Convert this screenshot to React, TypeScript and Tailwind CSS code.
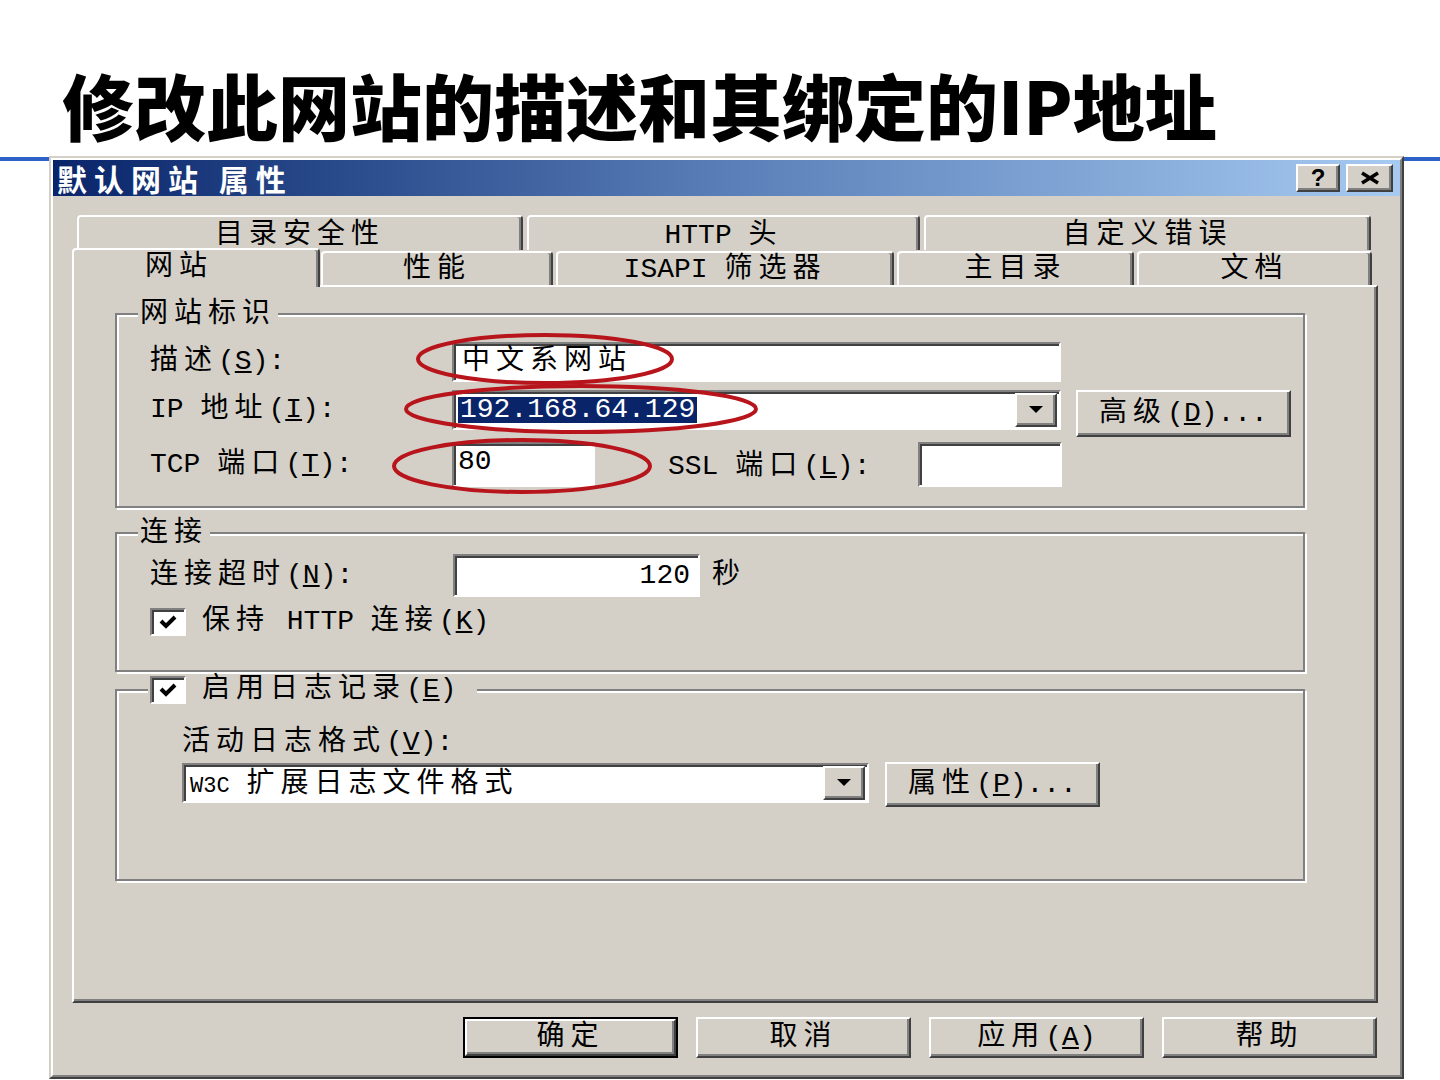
import React from "react";

const CJK = /[\u3000-\u9fff\uff00-\uffef]/;

function T({ s }: { s: string }) {
  const parts: { t: string; c: boolean }[] = [];
  for (const ch of s) {
    const c = CJK.test(ch);
    const last = parts[parts.length - 1];
    if (last && last.c === c) last.t += ch;
    else parts.push({ t: ch, c });
  }
  return (
    <span>
      {parts.map((p, i) =>
        p.c ? (
          <span key={i} className="tracking-[6px]">
            {p.t}
          </span>
        ) : (
          <span key={i} className="whitespace-pre">{p.t}</span>
        )
      )}
    </span>
  );
}

const RAISED =
  "bg-[#d4d0c8] border-2 border-t-white border-l-white border-r-[#404040] border-b-[#404040] shadow-[inset_-2px_-2px_0_#808080]";
const SUNKEN =
  "bg-white border-2 border-t-[#808080] border-l-[#808080] border-r-white border-b-white shadow-[inset_2px_2px_0_#404040]";

function Arrow() {
  return (
    <svg width="14" height="8" viewBox="0 0 14 8">
      <polygon points="0,0 14,0 7,7" fill="#000" />
    </svg>
  );
}

function DropBtn() {
  return (
    <div className={`${RAISED} w-[42px] h-[34px] flex items-center justify-center`}>
      <Arrow />
    </div>
  );
}

function Check() {
  return (
    <div className={`${SUNKEN} w-[36px] h-[28px] flex items-center justify-center shrink-0`}>
      <svg width="22" height="16" viewBox="0 0 22 16">
        <polyline points="4,7 9,12 18,3" fill="none" stroke="#000" strokeWidth="4" />
      </svg>
    </div>
  );
}

function Btn({ children, w = "w-[215px]", h = "h-[41px]" }: { children: React.ReactNode; w?: string; h?: string }) {
  return (
    <div className={`${RAISED} ${w} ${h} flex items-center justify-center`}>{children}</div>
  );
}

function BackTab({ w, children }: { w: string; children: React.ReactNode }) {
  return (
    <div
      className={`${w} h-[35px] bg-[#d4d0c8] border-t-2 border-l-2 border-r-2 border-t-white border-l-white border-r-[#404040] rounded-t-[4px] shadow-[inset_-2px_0_0_#808080] flex justify-center pt-[5px]`}
    >
      {children}
    </div>
  );
}

function FrontTab({ w, children }: { w: string; children: React.ReactNode }) {
  return (
    <div
      className={`${w} h-[36px] bg-[#d4d0c8] border-t-2 border-l-2 border-r-2 border-t-white border-l-white border-r-[#404040] rounded-t-[4px] shadow-[inset_-2px_0_0_#808080] flex justify-center pt-[3px]`}
    >
      {children}
    </div>
  );
}

const FS =
  "border-2 border-[#808080] shadow-[inset_2px_2px_0_#ffffff,2px_2px_0_#ffffff] w-[1190px]";

export default function App() {
  return (
    <div className="relative w-[1440px] h-[1080px] bg-white overflow-hidden font-['Liberation_Mono','Noto_Sans_CJK_SC',monospace] text-black">
      <div className="absolute left-0 top-[157px] h-[4px] w-full bg-[#2f62c8]" />

      <div className="h-[156px] pt-[68px] pl-[62px]">
        <h1 className="text-[72px] leading-[72px] font-black font-['Noto_Sans_CJK_SC',sans-serif] text-black whitespace-nowrap">
          修改此网站的描述和其绑定的IP地址
        </h1>
      </div>

      {/* Dialog */}
      <div className="relative ml-[49px] w-[1355px] h-[923px] bg-[#d4d0c8] border-2 border-t-[#d4d0c8] border-l-[#d4d0c8] border-r-[#404040] border-b-[#404040]">
        <div className="h-full border-2 border-t-white border-l-white border-r-[#808080] border-b-[#808080]">
          {/* Title bar */}
          <div className="h-[36px] bg-linear-to-r from-[#0a246a] via-[#5a7fb8] to-[#a6caf0] flex items-center pl-[4px] pr-[7px]">
            <div className="text-white font-bold text-[30px] leading-[30px] tracking-[7px] font-['Noto_Sans_CJK_SC',sans-serif] flex-1 whitespace-pre">
              默认网站 属性
            </div>
            <div className={`${RAISED} w-[44px] h-[28px] flex items-center justify-center text-[24px] leading-[24px] font-bold font-['Liberation_Sans',sans-serif]`}>
              ?
            </div>
            <div className={`${RAISED} ml-[6px] w-[47px] h-[28px] flex items-center justify-center`}>
              <svg width="22" height="14" viewBox="0 0 22 14">
                <line x1="3" y1="2" x2="19" y2="12" stroke="#000" strokeWidth="3.5" />
                <line x1="19" y1="2" x2="3" y2="12" stroke="#000" strokeWidth="3.5" />
              </svg>
            </div>
          </div>

          {/* Body */}
          <div className="pt-[19px] pl-[19px] text-[28px] leading-[28px]">
            {/* back tab row */}
            <div className="flex gap-[4px] ml-[5px]">
              <BackTab w="w-[446px]">
                <T s="目录安全性" />
              </BackTab>
              <BackTab w="w-[393px]">
                <T s="HTTP 头" />
              </BackTab>
              <BackTab w="w-[447px]">
                <T s="自定义错误" />
              </BackTab>
            </div>
            {/* front tab row */}
            <div className="flex items-end h-[39px] -mt-[2px]">
              <div className="relative z-10 w-[248px] h-[39px] bg-[#d4d0c8] border-t-2 border-l-2 border-r-2 border-t-white border-l-white border-r-[#404040] rounded-t-[4px] shadow-[inset_-2px_0_0_#808080] pl-[71px] pt-[4px]">
                <T s="网站" />
              </div>
              <div className="ml-[1px]">
                <FrontTab w="w-[232px]">
                  <T s="性能" />
                </FrontTab>
              </div>
              <div className="ml-[3px]">
                <FrontTab w="w-[338px]">
                  <T s="ISAPI 筛选器" />
                </FrontTab>
              </div>
              <div className="ml-[3px]">
                <FrontTab w="w-[237px]">
                  <T s="主目录" />
                </FrontTab>
              </div>
              <div className="ml-[3px]">
                <FrontTab w="w-[235px]">
                  <T s="文档" />
                </FrontTab>
              </div>
            </div>

            {/* panel */}
            <div className="relative -mt-[2px] w-[1306px] h-[718px] border-2 border-t-white border-l-white border-r-[#404040] border-b-[#404040] shadow-[inset_-2px_-2px_0_#808080] pt-[11px] pl-[41px]">
              {/* 网站标识 */}
              <fieldset className={`${FS} pb-[19px]`}>
                <legend className="ml-[21px] px-[2px] bg-[#d4d0c8] leading-[28px] pt-[3px]">
                  <T s="网站标识" />
                </legend>
                <div className="pl-[33px]">
                  <div className="flex items-center mt-[13px] h-[40px]">
                    <div className="w-[302px]">
                      <T s="描述" />(<u>S</u>):
                    </div>
                    <div className={`${SUNKEN} w-[609px] h-[40px] flex items-center pl-[8px]`}>
                      <T s="中文系网站" />
                    </div>
                  </div>
                  <div className="flex items-start mt-[8px] h-[47px]">
                    <div className="w-[302px] h-[40px] flex items-center">
                      <span>
                        <T s="IP 地址" />(<u>I</u>):
                      </span>
                    </div>
                    <div className={`${SUNKEN} w-[609px] h-[40px] flex items-center pl-[4px] pr-[2px]`}>
                      <span className="bg-[#0a246a] text-white leading-[26px] px-[2px]">192.168.64.129</span>
                      <div className="flex-1" />
                      <DropBtn />
                    </div>
                    <div className="ml-[15px]">
                      <Btn h="h-[47px]">
                        <span>
                          <T s="高级" />(<u>D</u>)...
                        </span>
                      </Btn>
                    </div>
                  </div>
                  <div className="flex items-center mt-[5px] h-[45px]">
                    <div className="w-[302px]">
                      <T s="TCP 端口" />(<u>T</u>):
                    </div>
                    <div className={`${SUNKEN} w-[143px] h-[45px] pl-[4px] pt-[4px]`}>80</div>
                    <div className="ml-[73px] w-[250px] pt-[4px]">
                      <T s="SSL 端口" />(<u>L</u>):
                    </div>
                    <div className={`${SUNKEN} w-[144px] h-[45px]`} />
                  </div>
                </div>
              </fieldset>

              {/* 连接 */}
              <fieldset className={`${FS} mt-[9px] pb-[34px]`}>
                <legend className="ml-[21px] px-[2px] bg-[#d4d0c8] leading-[28px] pt-[3px]">
                  <T s="连接" />
                </legend>
                <div className="pl-[33px]">
                  <div className="flex items-center mt-[6px] h-[43px]">
                    <div className="w-[303px]">
                      <T s="连接超时" />(<u>N</u>):
                    </div>
                    <div className={`${SUNKEN} w-[247px] h-[43px] flex items-center justify-end pr-[8px]`}>120</div>
                    <div className="ml-[12px]">
                      <T s="秒" />
                    </div>
                  </div>
                  <div className="flex items-center mt-[11px] h-[28px]">
                    <Check />
                    <div className="ml-[16px]">
                      <T s="保持 HTTP 连接" />(<u>K</u>)
                    </div>
                  </div>
                </div>
              </fieldset>

              {/* 日志 */}
              <fieldset className={`${FS} mt-[4px] pb-[72px]`}>
                <legend className="ml-[31px] pl-[2px] pr-[21px] bg-[#d4d0c8] leading-[28px]">
                  <div className="flex items-center">
                    <Check />
                    <div className="ml-[16px]">
                      <T s="启用日志记录" />(<u>E</u>)
                    </div>
                  </div>
                </legend>
                <div className="pl-[65px]">
                  <div className="mt-[25px] h-[28px]">
                    <T s="活动日志格式" />(<u>V</u>):
                  </div>
                  <div className="flex items-start mt-[6px]">
                    <div className={`${SUNKEN} w-[687px] h-[40px] flex items-center pl-[6px] pr-[2px]`}>
                      <span className="pt-[4px]">
                        <span className="text-[22px] leading-[22px]">W3C</span> <T s="扩展日志文件格式" />
                      </span>
                      <div className="flex-1" />
                      <DropBtn />
                    </div>
                    <div className="ml-[16px] -mt-[1px]">
                      <Btn h="h-[45px]">
                        <span>
                          <T s="属性" />(<u>P</u>)...
                        </span>
                      </Btn>
                    </div>
                  </div>
                </div>
              </fieldset>
            </div>

            {/* bottom buttons */}
            <div className="w-[1306px] flex justify-end gap-[18px] pr-[1px] mt-[14px]">
              <div className="border-2 border-black">
                <Btn w="w-[211px]" h="h-[37px]">
                  <T s="确定" />
                </Btn>
              </div>
              <Btn>
                <T s="取消" />
              </Btn>
              <Btn>
                <span>
                  <T s="应用" />(<u>A</u>)
                </span>
              </Btn>
              <Btn>
                <T s="帮助" />
              </Btn>
            </div>
          </div>
        </div>
      </div>

      {/* red annotation ellipses */}
      <svg className="absolute left-0 top-0 pointer-events-none" width="1440" height="1080">
        <ellipse cx="545" cy="359" rx="127" ry="24" fill="none" stroke="#b8141c" strokeWidth="4" />
        <ellipse cx="581" cy="409" rx="175" ry="23" fill="none" stroke="#b8141c" strokeWidth="4" />
        <ellipse cx="522" cy="466" rx="128" ry="26" fill="none" stroke="#b8141c" strokeWidth="4" />
      </svg>
    </div>
  );
}
